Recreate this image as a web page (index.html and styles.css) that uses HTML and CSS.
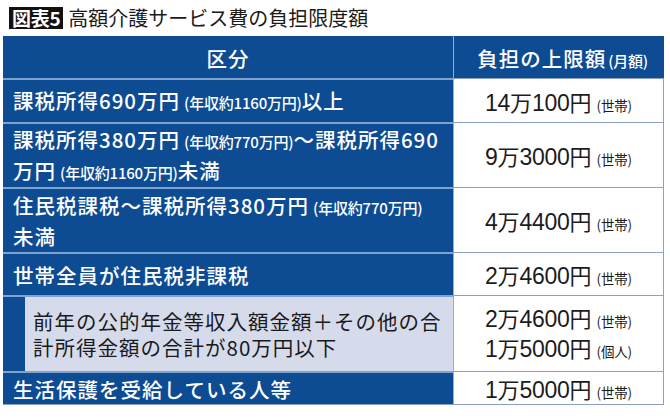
FILE: index.html
```html
<!DOCTYPE html>
<html lang="ja">
<head>
<meta charset="utf-8">
<link rel="stylesheet" href="styles.css">
</head>
<body>
<div class="title"><span class="badge">図表5</span><span class="title-text">高額介護サービス費の負担限度額</span></div>
<div class="table">
  <div class="hd hd-left"><span>区分</span></div>
  <div class="hd hd-right"><span>負担の上限額<span class="sm">(月額)</span></span></div>

  <div class="lc r1"><span>課税所得690万円<span class="sm">(年収約1160万円)</span>以上</span></div>
  <div class="rc r1"><span><span class="num">14</span>万<span class="num">100</span>円<span class="sm">(世帯)</span></span></div>

  <div class="lc r2"><span>課税所得380万円<span class="sm">(年収約770万円)</span>～課税所得690<br>万円<span class="sm">(年収約1160万円)</span>未満</span></div>
  <div class="rc r2"><span><span class="num">9</span>万<span class="num">3000</span>円<span class="sm">(世帯)</span></span></div>

  <div class="lc r3"><span>住民税課税～課税所得380万円<span class="sm">(年収約770万円)</span><br>未満</span></div>
  <div class="rc r3"><span><span class="num">4</span>万<span class="num">4400</span>円<span class="sm">(世帯)</span></span></div>

  <div class="lc r4"><span>世帯全員が住民税非課税</span></div>
  <div class="rc r4"><span><span class="num">2</span>万<span class="num">4600</span>円<span class="sm">(世帯)</span></span></div>

  <div class="lc r5 sub"><div class="sub-box"><span>前年の公的年金等収入額金額＋その他の合<br>計所得金額の合計が80万円以下</span></div></div>
  <div class="rc r5 multi"><span><span class="num">2</span>万<span class="num">4600</span>円<span class="sm">(世帯)</span></span><span><span class="num">1</span>万<span class="num">5000</span>円<span class="sm">(個人)</span></span></div>

  <div class="lc r6"><span>生活保護を受給している人等</span></div>
  <div class="rc r6"><span><span class="num">1</span>万<span class="num">5000</span>円<span class="sm">(世帯)</span></span></div>
</div>
</body>
</html>
```

FILE: styles.css
```css
* { box-sizing: border-box; }
body {
  margin: 0;
  background: #fff;
  font-family: "Noto Sans CJK JP", "Noto Sans", sans-serif;
  width: 670px;
  height: 419px;
  overflow: hidden;
}
.title {
  display: flex;
  align-items: center;
  margin: 6px 0 0 9px;
  height: 23px;
}
.badge {
  background: #111;
  color: #fff;
  font-size: 19px;
  font-weight: 700;
  line-height: 22px;
  padding: 0 3px 0 3px;
  letter-spacing: -0.3px;
}
.title-text {
  margin-left: 5px;
  font-size: 20px;
  font-weight: 400;
  color: #1a1a1a;
  line-height: 23px;
}
.table {
  margin: 7px 0 0 3px;
  width: 661px;
  display: grid;
  grid-template-columns: 451px 210px;
  grid-template-rows: 42px 44px 65px 65px 43px 76px 34px;
}
.hd {
  background: #0d4b92;
  color: #fff;
  font-weight: 500;
  font-size: 20.5px;
  display: flex;
  align-items: center;
  justify-content: center;
  letter-spacing: 1px;
}
.hd-left { border-right: 1px solid #8eaed4; padding-top: 2px; }
.hd-right { padding-top: 2px; padding-left: 8px; border-right: 1px solid #0d4b92; }
.hd .sm { letter-spacing: -0.3px; margin-left: 2px; }
.sm {
  font-size: 15px;
  font-weight: 500;
  letter-spacing: -0.2px;
  margin-left: 4px;
}
.lc {
  background: #0d4b92;
  color: #fff;
  font-size: 20.5px;
  font-weight: 500;
  letter-spacing: 1px;
  line-height: 28px;
  padding-left: 10px;
  display: flex;
  align-items: center;
  border-top: 2px solid #7fa3cf;
  border-right: 1px solid #8eaed4;
  white-space: nowrap;
}
.rc {
  background: #fff;
  color: #1c1c1c;
  font-size: 22px;
  font-weight: 400;
  display: flex;
  align-items: center;
  justify-content: center;
  border-top: 1px solid #8d9fc0;
  border-right: 1px solid #8d9fc0;
  white-space: nowrap;
}
.num {
  font-family: "Liberation Sans", "Noto Sans", sans-serif;
  font-size: 23px;
  letter-spacing: -0.3px;
}
.rc .sm { font-weight: 400; font-size: 13.5px; margin-left: 5px; }
.rc.multi {
  flex-direction: column;
  line-height: 26px;
}
.r6.rc, .r6.lc { border-bottom: 1px solid #8d9fc0; }
.lc.sub {
  padding: 0 0 0 22px;
  align-items: stretch;
}
.sub-box {
  flex: 1;
  background: #d6dbec;
  color: #1a1a1a;
  font-weight: 400;
  padding-left: 8px;
  display: flex;
  align-items: center;
  line-height: 26px;
}
```
